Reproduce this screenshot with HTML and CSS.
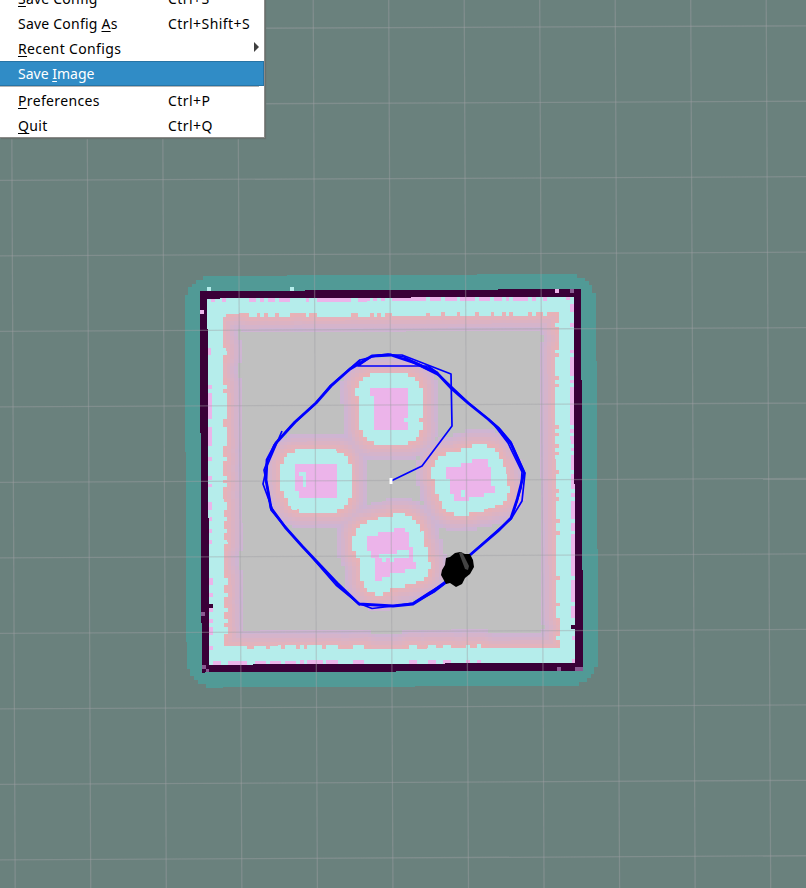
FILE: index.html
```html
<!DOCTYPE html>
<html lang="en">
<head>
<meta charset="utf-8">
<title>Map view</title>
<link rel="stylesheet" href="styles.css">
</head>
<body>
<svg class="scene" viewBox="0 0 806 888" width="806" height="888">
  <g id="costmap" transform="translate(391.4 480.7) rotate(-0.3) scale(3.775) translate(-50.5 -50.5)" shape-rendering="crispEdges"></g>
  <g id="grid" class="grid"></g>
  <g class="path">
    <path d="M391 481 422 466 452 426 451 374 402 355 380 355 360 360 330 386 315 404 290 427 274 445 264 470 268 490 271 510 285 527 302 546 336 585 358 603 372 608.500 393 606 413 603 430 592 445 583"/>
    <path d="M470 555 498 530 511 519 522 501 525 473 511 442 499 428 470 404 452 387 436 372 404 357 388 354 372 356 358 366 428 366 438 373"/>
    <path class="thick" d="M470 555 498 531 511 518 517 500 524 473 511 444 500 430 488 419 468 403 452 389 437 373 415 363 391 355 372 356 350 369 331 386 316 403 295 422 276 443 267 460 266 480 271 508 285 527 302 546 337 583 359 604 393 606 413 604 432 592 447 581"/>
    <path d="M512 517 521 488 522 472 508 443 495 426M404 358 440 376M360 360 348 371M282 431 276 445 267 466 263 484 273 511 288 530M336 583 360 605M414 603 434 592 447 582"/>
  </g>
  <rect x="389.500" y="478" width="3" height="6" fill="#fff"/>
  <path d="M446 558 450 557 455 553 460 552 465 554 470 554 473 560 474 567 470 574 465 578 462 584 456 587 450 583 446 584 441 575 442 570 445 565Z"/>
  <path d="M459 553 462 552 469 566 468 570 465 569Z" fill="#444"/>
</svg>
<nav class="menu">
  <div class="item"><span class="name"><u>S</u>ave Config</span><span class="key">Ctrl+S</span></div>
  <div class="item"><span class="name">Save Config <u>A</u>s</span><span class="key">Ctrl+Shift+S</span></div>
  <div class="item"><span class="name wide"><u>R</u>ecent Configs</span><span class="arrow"></span></div>
  <div class="item active"><span class="name tight">Save <u>I</u>mage</span></div>
  <div class="separator"></div>
  <div class="item"><span class="name wide"><u>P</u>references</span><span class="key">Ctrl+P</span></div>
  <div class="item"><span class="name wide"><u>Q</u>uit</span><span class="key">Ctrl+Q</span></div>
</nav>
<script src="map.js"></script>
</body>
</html>
```
FILE: styles.css
```css
body {
  margin: 0;
  width: 806px;
  height: 888px;
  overflow: hidden;
  position: relative;
  background: #6a817d;
  font: 14px/25px "Noto Sans", "Open Sans", sans-serif;
  color: #000;
}
.scene { display: block; }
.grid { stroke: #a0a0a4; stroke-opacity: .42; stroke-width: 1.3; }
.path { fill: none; stroke: #00f; stroke-width: 1.7; stroke-linejoin: round; }
.thick { stroke-width: 2.8; }
.menu {
  position: absolute;
  left: 0;
  top: -14px;
  width: 264px;
  height: 151px;
  background: #fff;
  border-right: 1px solid #8b8b89;
  border-bottom: 1px solid #8b8b89;
  box-shadow: 1px 1px 1px #66716e;
}
.item {
  box-sizing: border-box;
  height: 25px;
  display: flex;
  align-items: center;
  padding-left: 18px;
  white-space: nowrap;
}
.name { width: 150px; letter-spacing: .22px; }
.wide { letter-spacing: .35px; }
.tight { letter-spacing: 0; }
.key { letter-spacing: .45px; }
.active {
  background: #308cc6;
  color: #fff;
  box-shadow: inset 0 1px #2774a5, inset 0 -1px #2774a5, inset -1px 0 #2774a5;
}
.separator { height: 1px; margin: 0 5px 1px 0; background: #b5b5b5; }
u { text-decoration-thickness: 1px; text-underline-offset: 2px; }
.arrow {
  margin-left: 86px;
  margin-top: -3px;
  border-left: 5px solid #404040;
  border-top: 5px solid transparent;
  border-bottom: 5px solid transparent;
}
```
FILE: map.js
```js
const NS = "http://www.w3.org/2000/svg";
const costmap = document.getElementById("costmap");
const grid = document.getElementById("grid");

function add(parent, tag, attrs) {
  const el = document.createElementNS(NS, tag);
  for (const k in attrs) el.setAttribute(k, attrs[k]);
  parent.appendChild(el);
}

// Cells are addressed "column,row" on a 101 x 101 map.
const SIZE = 101;
const pink = new Set();
const key = (c, r) => c + "," + r;
function fill(set, c0, c1, r0, r1) {
  for (let r = r0; r <= r1; r++) for (let c = c0; c <= c1; c++) set.add(key(c, r));
}
function clear(c0, c1, r0, r1) {
  for (let r = r0; r <= r1; r++) for (let c = c0; c <= c1; c++) pink.delete(key(c, r));
}

// Wall returns, as [first, last] runs along each side.
[[3,3],[6,6],[13,14],[16,16],[18,19],[21,23],[28,28],[31,39],[42,44],[46,46],[48,48],[51,59],[61,63],[65,67],[69,72],[74,76],[78,79],[81,81],[83,86],[88,88],[91,91],[97,97]].forEach(a => fill(pink, a[0], a[1], 2, 2));
[[15,16],[25,25],[27,33],[36,40],[44,44],[49,49],[51,51],[56,57],[60,60],[63,63],[66,66],[76,77],[80,80],[84,84],[87,87],[89,90],[94,94]].forEach(a => fill(pink, 2, 2, a[0], a[1]));
[[4,5],[9,9],[16,16],[18,22],[24,24],[26,35],[37,37],[39,40],[42,42],[44,47],[49,52],[54,54],[56,60],[62,63],[65,75],[77,82],[84,86],[92,92],[98,98]].forEach(a => fill(pink, 98, 98, a[0], a[1]));
[[3,4],[7,11],[14,16],[18,20],[22,24],[26,26],[28,31],[33,35],[40,42],[55,56],[60,61],[64,65],[70,70],[73,73]].forEach(a => fill(pink, a[0], a[1], 98, 98));

// Top block
fill(pink, 45, 54, 26, 27); fill(pink, 46, 54, 28, 36); clear(54, 54, 34, 34);
// Left block
fill(pink, 25, 35, 46, 54); clear(25, 25, 53, 54); clear(26, 27, 48, 48); clear(27, 27, 49, 51);
// Right block
fill(pink, 72, 75, 45, 45); fill(pink, 69, 75, 46, 46); fill(pink, 65, 76, 47, 49);
fill(pink, 66, 76, 50, 51); fill(pink, 66, 77, 52, 53); fill(pink, 67, 74, 54, 54);
fill(pink, 67, 70, 55, 55); clear(69, 69, 53, 54);
// Bottom block
fill(pink, 51, 53, 63, 63); fill(pink, 47, 54, 64, 64); fill(pink, 44, 54, 65, 68);
fill(pink, 45, 51, 69, 69); fill(pink, 45, 46, 70, 70); fill(pink, 55, 55, 68, 71);
fill(pink, 46, 47, 71, 71); fill(pink, 49, 49, 71, 71); fill(pink, 51, 55, 71, 71);
fill(pink, 46, 56, 72, 73); fill(pink, 46, 53, 74, 74); fill(pink, 46, 49, 75, 75);
fill(pink, 46, 47, 76, 76);

function distance(c, r) {
  let best = Math.min(c - 1, r - 1, 99 - c, 99 - r);
  for (let dr = -8; dr <= 8; dr++) for (let dc = -8; dc <= 8; dc++) {
    if (pink.has(key(c + dc, r + dr))) best = Math.min(best, Math.hypot(dc, dr));
  }
  return best;
}

function colour(c, r) {
  if (c < 2 || r < 2 || c > 98 || r > 98) return "#3a0038";
  if (pink.has(key(c, r))) return "#ecb4ea";
  const d = distance(c, r);
  if (d <= 4) return "#b5edeb";
  if (d > 8.4) return "#c0c0c0";
  const t = (d - 4.2) / 4.2;
  const mix = (a, b) => Math.round(a + (b - a) * Math.max(0, t));
  return `rgb(${mix(232, 204)},${mix(178, 181)},${mix(182, 213)})`;
}

// Outer inflation band, stepped at its corners.
for (let r = -4; r <= 104; r++) {
  const n = Math.min(r + 4, 104 - r);
  const cut = [5, 3, 2, 1, 1, 0][n] || 0;
  add(costmap, "rect", { x: -4 + cut, y: r, width: 109 - 2 * cut, height: 1.05, fill: "#519a96" });
}
for (let r = 0; r < SIZE; r++) {
  let start = 0;
  for (let c = 1; c <= SIZE; c++) {
    if (c === SIZE || colour(c, r) !== colour(start, r)) {
      add(costmap, "rect", { x: start, y: r, width: c - start + (c < SIZE ? 0.05 : 0), height: 1.05, fill: colour(start, r) });
      start = c;
    }
  }
}
// Stray cells
[[2,-1,"#b5edeb"],[24,-1,"#b5edeb"],[0,5,"#ecb4ea"],[94,0,"#ecb4ea"],[98,0,"#8a5a92"],[2,83,"#3a0038"],[0,85,"#8a5a92"],[0,99,"#8a5a92"],[1,100,"#8a5a92"],[98,89,"#3a0038"],[94,100,"#8a5a92"],[99,100,"#8a5a92"],[100,100,"#8a5a92"]]
  .forEach(s => add(costmap, "rect", { x: s[0], y: s[1], width: 1.05, height: 1.05, fill: s[2] }));

for (let k = 0; k <= 10; k++) {
  add(grid, "line", { x1: 11.2 + 75.5 * k, y1: 0, x2: 15.2 + 75.55 * k, y2: 888 });
}
for (let k = -2; k <= 9; k++) {
  add(grid, "line", { x1: 0, y1: 180.4 + 75.5 * k, x2: 806, y2: 176.7 + 75.45 * k });
}
```
